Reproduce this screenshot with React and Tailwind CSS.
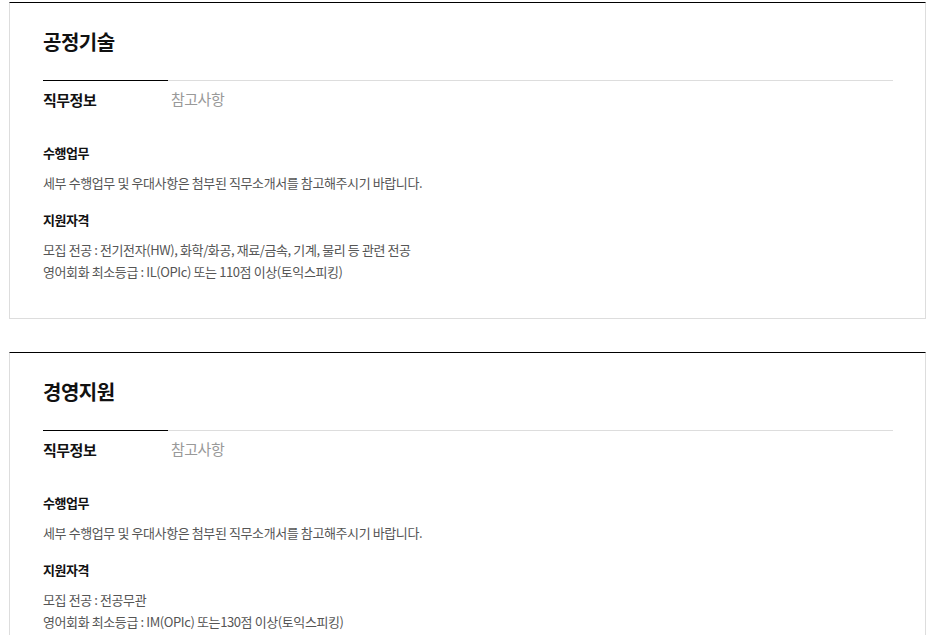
const JOBS = [
  {
    title: '공정기술',
    major: '모집 전공 : 전기전자(HW), 화학/화공, 재료/금속, 기계, 물리 등 관련 전공',
    english: '영어회화 최소등급 : IL(OPIc) 또는 110점 이상(토익스피킹)',
  },
  {
    title: '경영지원',
    major: '모집 전공 : 전공무관',
    english: '영어회화 최소등급 : IM(OPIc) 또는130점 이상(토익스피킹)',
  },
]

function JobCard({ job }) {
  return (
    <div className="border border-[#dddddd] border-t-black bg-white pt-[25px] pl-[33px] pr-[32px] pb-[35px]">
      <h2 className="text-[20px] leading-[28px] font-bold text-[#111] tracking-[-0.5px]">{job.title}</h2>
      <div className="mt-[24px] flex border-t border-[#dddddd]">
        <div className="w-[125px] -mt-px border-t border-black pt-[9px] text-[15px] leading-[20px] font-bold text-[#111] tracking-[-0.5px]">
          직무정보
        </div>
        <div className="pl-[3px] pt-[8px] text-[15px] leading-[20px] text-[#999] tracking-[-0.5px]">참고사항</div>
      </div>
      <h3 className="mt-[34px] text-[13px] leading-[18px] font-bold text-[#111] tracking-[-0.5px]">수행업무</h3>
      <p className="mt-[12px] text-[13px] leading-[18px] text-[#555] tracking-[-0.4px]">
        세부 수행업무 및 우대사항은 첨부된 직무소개서를 참고해주시기 바랍니다.
      </p>
      <h3 className="mt-[19px] text-[13px] leading-[18px] font-bold text-[#111] tracking-[-0.5px]">지원자격</h3>
      <div className="mt-[10px] text-[13px] leading-[22px] text-[#555] tracking-[-0.4px]">
        <p>{job.major}</p>
        <p>{job.english}</p>
      </div>
    </div>
  )
}

export default function App() {
  return (
    <div
      className="min-h-screen bg-white pt-[2px] pl-[9px] pr-[26px]"
      style={{ fontFamily: '"Noto Sans CJK KR", "Noto Sans", sans-serif' }}
    >
      <div className="flex flex-col gap-[33px]">
        {JOBS.map((job) => (
          <JobCard key={job.title} job={job} />
        ))}
      </div>
    </div>
  )
}
